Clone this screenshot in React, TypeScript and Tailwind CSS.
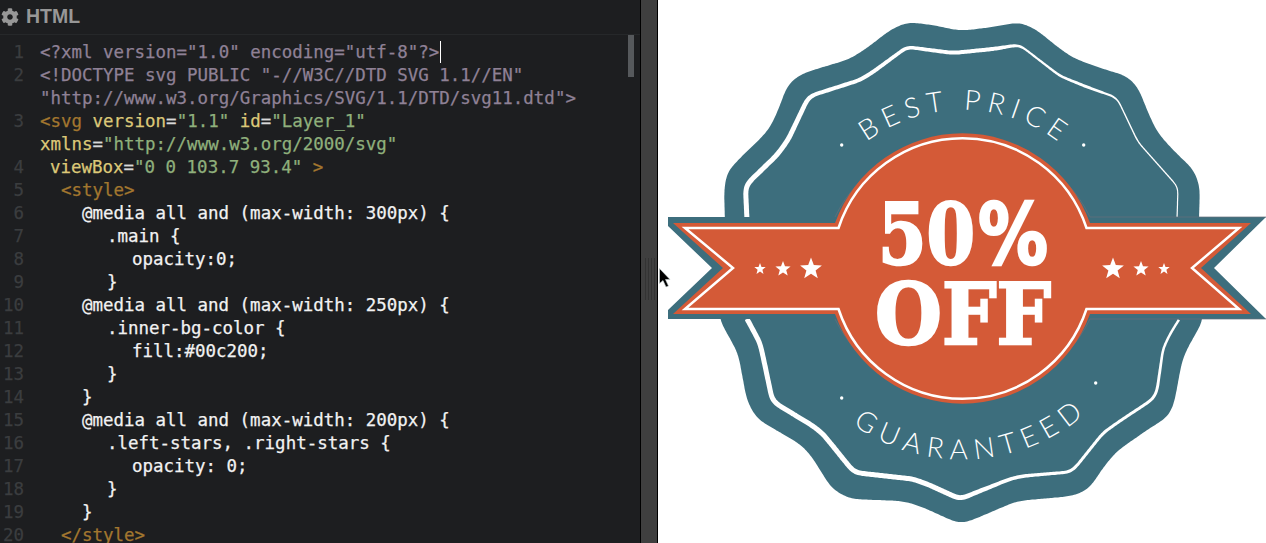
import { FaCog } from "react-icons/fa";

type Tok = [string, string];
type Row = { n?: number; pad: number; toks: Tok[] };

const DOC = "text-[#8f8196]";
const TAG = "text-[#a3772f]";
const ATTR = "text-[#dcc878]";
const VAL = "text-[#8fb07c]";
const EQ = "text-[#d8d8d8]";
const CSS = "text-[#f2f2f2]";

const rows: Row[] = [
  { n: 1, pad: 0, toks: [['<?xml version="1.0" encoding="utf-8"?>', DOC]] },
  { n: 2, pad: 0, toks: [['<!DOCTYPE svg PUBLIC "-//W3C//DTD SVG 1.1//EN"', DOC]] },
  { pad: 0, toks: [['"http://www.w3.org/Graphics/SVG/1.1/DTD/svg11.dtd">', DOC]] },
  {
    n: 3,
    pad: 0,
    toks: [["<svg ", TAG], ["version", ATTR], ["=", EQ], ['"1.1" ', VAL], ["id", ATTR], ["=", EQ], ['"Layer_1"', VAL]],
  },
  { pad: 0, toks: [["xmlns", ATTR], ["=", EQ], ['"http://www.w3.org/2000/svg"', VAL]] },
  { n: 4, pad: 10, toks: [["viewBox", ATTR], ["=", EQ], ['"0 0 103.7 93.4" ', VAL], [">", TAG]] },
  { n: 5, pad: 21, toks: [["<style>", TAG]] },
  { n: 6, pad: 42, toks: [["@media all and (max-width: 300px) {", CSS]] },
  { n: 7, pad: 67, toks: [[".main {", CSS]] },
  { n: 8, pad: 92, toks: [["opacity:0;", CSS]] },
  { n: 9, pad: 67, toks: [["}", CSS]] },
  { n: 10, pad: 42, toks: [["@media all and (max-width: 250px) {", CSS]] },
  { n: 11, pad: 67, toks: [[".inner-bg-color {", CSS]] },
  { n: 12, pad: 92, toks: [["fill:#00c200;", CSS]] },
  { n: 13, pad: 67, toks: [["}", CSS]] },
  { n: 14, pad: 42, toks: [["}", CSS]] },
  { n: 15, pad: 42, toks: [["@media all and (max-width: 200px) {", CSS]] },
  { n: 16, pad: 67, toks: [[".left-stars, .right-stars {", CSS]] },
  { n: 17, pad: 92, toks: [["opacity: 0;", CSS]] },
  { n: 18, pad: 67, toks: [["}", CSS]] },
  { n: 19, pad: 42, toks: [["}", CSS]] },
  { n: 20, pad: 21, toks: [["</style>", TAG]] },
];

const outline: number[][] = [
  [725, 220], [724, 190], [727, 172], [742, 156], [760, 139], [770, 128], [779, 108], [787, 86], [797, 76], [810, 71],
  [830, 65], [850, 59], [867, 48], [890, 30], [907, 22], [933, 25], [960, 31], [993, 27], [1020, 22], [1037, 30],
  [1055, 45], [1073, 58], [1100, 68], [1127, 76], [1138, 87], [1147, 110], [1157, 132], [1173, 150], [1194, 170],
  [1200, 187], [1199, 217], [1199, 300], [1204, 319], [1187, 349], [1182, 361], [1174, 404], [1168, 417], [1150, 428],
  [1117, 451], [1105, 465], [1089, 489], [1073, 496], [1017, 501], [970, 521], [960, 524], [953, 521], [920, 506],
  [903, 501], [850, 499], [832, 489], [810, 454], [800, 444], [757, 419], [747, 401], [738, 353], [719, 319],
];

// x, y, width
const topLine: number[][] = [
  [747, 220, 5], [745.5, 188, 5], [749, 182, 5], [777, 155, 5], [788, 140, 5], [808, 98, 4.5], [813, 95, 4], [860, 80, 4],
  [873, 72, 4], [907, 47, 3.5], [953, 53, 4], [993, 49, 4], [1018, 45, 3], [1021, 46, 2], [1060, 76, 2.5], [1087, 87, 3],
  [1115, 97, 2], [1118, 100, 1.4], [1138, 142, 1.4], [1178, 187, 1.2], [1177, 220, 1.2],
];

const bottomLine: number[][] = [
  [746, 317, 5], [760, 343, 5], [764, 361, 5], [772, 399, 5], [775, 403, 5], [813, 426, 5], [823, 434, 5], [853, 471, 5],
  [858, 473, 5], [913, 479, 5], [927, 484, 5], [960, 499, 5], [1010, 479, 3.5], [1023, 476, 3.5], [1070, 472, 3],
  [1075, 468, 3], [1103, 433, 3], [1117, 423, 3], [1153, 399, 3], [1157, 391, 3], [1163, 349, 2.5], [1170, 334, 2.5],
  [1180, 318, 2.5],
];

// resample the polyline evenly, then box-filter it so the bends come out soft
function smooth(pts: number[][], radius: number, closed: boolean) {
  const src = closed ? [...pts, pts[0]] : pts;
  const dense: number[][] = [];
  for (let i = 0; i < src.length - 1; i++) {
    const a = src[i];
    const b = src[i + 1];
    const steps = Math.max(1, Math.round(Math.hypot(b[0] - a[0], b[1] - a[1]) / 1.5));
    for (let s = 0; s < steps; s++) dense.push(a.map((v, k) => v + ((b[k] - v) * s) / steps));
  }
  if (!closed) dense.push(src[src.length - 1]);
  let cur = dense;
  for (let pass = 0; pass < 2; pass++) {
    const n = cur.length;
    const prev = cur;
    cur = prev.map((p, i) => {
      const sum = p.map(() => 0);
      for (let d = -radius; d <= radius; d++) {
        const q = closed ? prev[(i + d + n) % n] : prev[Math.max(0, Math.min(n - 1, i + d))];
        q.forEach((v, k) => (sum[k] += v));
      }
      return sum.map((v) => v / (2 * radius + 1));
    });
  }
  return cur;
}

const toPath = (pts: number[][]) => "M" + pts.map((p) => `${p[0].toFixed(1)} ${p[1].toFixed(1)}`).join("L") + "Z";

// white line that gets thinner along its length
function taper(pts: number[][]) {
  const s = smooth(pts, 3, false);
  const left: number[][] = [];
  const right: number[][] = [];
  s.forEach((p, i) => {
    const a = s[Math.max(0, i - 2)];
    const b = s[Math.min(s.length - 1, i + 2)];
    const len = Math.hypot(b[0] - a[0], b[1] - a[1]) || 1;
    const nx = -(b[1] - a[1]) / len;
    const ny = (b[0] - a[0]) / len;
    const w = p[2] / 2;
    left.push([p[0] + nx * w, p[1] + ny * w]);
    right.push([p[0] - nx * w, p[1] - ny * w]);
  });
  return toPath([...left, ...right.reverse()]);
}

function star(cx: number, cy: number, r: number) {
  const pts = [];
  for (let i = 0; i < 10; i++) {
    const a = -Math.PI / 2 + (i * Math.PI) / 5;
    const rr = i % 2 ? r * 0.42 : r;
    pts.push(`${(cx + rr * Math.cos(a)).toFixed(1)},${(cy + rr * Math.sin(a)).toFixed(1)}`);
  }
  return pts.join(" ");
}

function Badge() {
  return (
    <svg width="608" height="543" viewBox="658 0 608 543" className="block">
      <defs>
        <path id="top-arc" d="M 833 176 A 160 160 0 0 1 1092 176" />
        <path id="bottom-arc" d="M 845 419 A 190 190 0 0 0 1094 406" />
      </defs>
      <path d={toPath(smooth(outline, 5, true))} fill="#3d6e7d" />
      <path d={taper(topLine)} fill="#fff" />
      <path d={taper(bottomLine)} fill="#fff" />

      <path d="M668 217H1266L1214 268L1266 319H668V310L712 268L668 226Z" fill="#3d6e7d" />
      <path d="M835 217A142 142 0 0 1 1090 217H1266M1266 319H1090A142 142 0 0 1 835 319" fill="none" stroke="#66707a" strokeOpacity="0.7" strokeWidth="1" />
      <path d="M673 223H835A135.5 135.5 0 0 1 1090 223H1251L1201 268L1251 314H1090A135.5 135.5 0 0 1 835 314H673L723 268Z" fill="#d45a37" />
      <path
        d="M685 228H838.5A130.5 130.5 0 0 1 1086.5 228H1239L1192 268L1239 309H1086.5A130.5 130.5 0 0 1 838.5 309H685L733 268Z"
        fill="none"
        stroke="#fff"
        strokeWidth="2.5"
      />

      <g fill="#fff">
        <polygon points={star(760, 269, 6)} />
        <polygon points={star(783, 269, 8)} />
        <polygon points={star(811, 269, 11.5)} />
        <polygon points={star(1113, 269, 11.5)} />
        <polygon points={star(1141, 269, 8)} />
        <polygon points={star(1164, 269, 6)} />
        <circle cx="841.7" cy="145" r="1.7" />
        <circle cx="1083.7" cy="145" r="1.7" />
        <circle cx="841.7" cy="398" r="1.7" />
        <circle cx="1095.7" cy="383" r="1.7" />
      </g>

      <g fill="#fff" className="font-['Lato',sans-serif] font-light text-[28px]">
        <text letterSpacing="6.4">
          <textPath href="#top-arc" startOffset="51%" textAnchor="middle">
            BEST PRICE
          </textPath>
        </text>
        <text letterSpacing="7">
          <textPath href="#bottom-arc" startOffset="50.5%" textAnchor="middle">
            GUARANTEED
          </textPath>
        </text>
      </g>

      <g fill="#fff" stroke="#fff" strokeWidth="2.5" className="font-bold">
        <text x="878" y="264" textLength="97" lengthAdjust="spacingAndGlyphs" className="font-['DejaVu_Serif',serif] text-[84px]">
          50
        </text>
        <text x="978" y="264" textLength="70" lengthAdjust="spacingAndGlyphs" className="font-['DejaVu_Sans',sans-serif] text-[84px]">
          %
        </text>
        <text x="875" y="344" textLength="176" lengthAdjust="spacingAndGlyphs" className="font-['DejaVu_Serif',serif] text-[84px]">
          OFF
        </text>
      </g>
    </svg>
  );
}

export default function App() {
  return (
    <div className="relative flex h-[543px] w-[1266px] overflow-hidden bg-white">
      <div className="relative h-full w-[640px] bg-[#1d1e20]">
        <div className="flex h-[35px] items-center gap-[7px] border-b border-[#26282a] pl-[1px] text-[#979797]">
          <FaCog size={18} />
          <span className="font-['Liberation_Sans',sans-serif] text-[19.5px] font-bold">HTML</span>
        </div>
        <div className="pt-[6px] font-['DejaVu_Sans_Mono',monospace] text-[17.47px] leading-[23px] [-webkit-text-stroke:0.25px]">
          {rows.map((row, i) => (
            <div key={i} className="flex h-[23px] whitespace-pre">
              <span className="w-[24px] shrink-0 text-right text-[#3b3d3f]">{row.n}</span>
              <span className="ml-[16px]" style={{ paddingLeft: row.pad }}>
                {row.toks.map(([text, color], j) => (
                  <span key={j} className={color}>
                    {text}
                  </span>
                ))}
                {i === 0 && <span className="ml-px inline-block h-[22px] w-px bg-white align-top" />}
              </span>
            </div>
          ))}
        </div>
        <div className="absolute left-[628px] top-[35px] h-[42px] w-[6px] bg-[#56595c]" />
      </div>

      <div className="relative flex h-full w-[18px] border-x border-black bg-[#3f3f3f]">
        <div className="absolute left-[4px] top-[258px] flex h-[42px] gap-[2px]">
          <div className="h-full w-px bg-[#333333]" />
          <div className="h-full w-px bg-[#333333]" />
          <div className="h-full w-px bg-[#333333]" />
          <div className="h-full w-px bg-[#333333]" />
        </div>
      </div>

      <div className="relative flex-1">
        <Badge />
        <svg width="14" height="22" viewBox="0 0 14 22" className="absolute left-[1px] top-[268px]">
          <path d="M0.5 0.5V15.5L4 12.5L7 19L9.5 18L6.5 11.5H11Z" fill="#000" stroke="#cfd8d8" strokeWidth="0.6" />
        </svg>
      </div>
    </div>
  );
}
